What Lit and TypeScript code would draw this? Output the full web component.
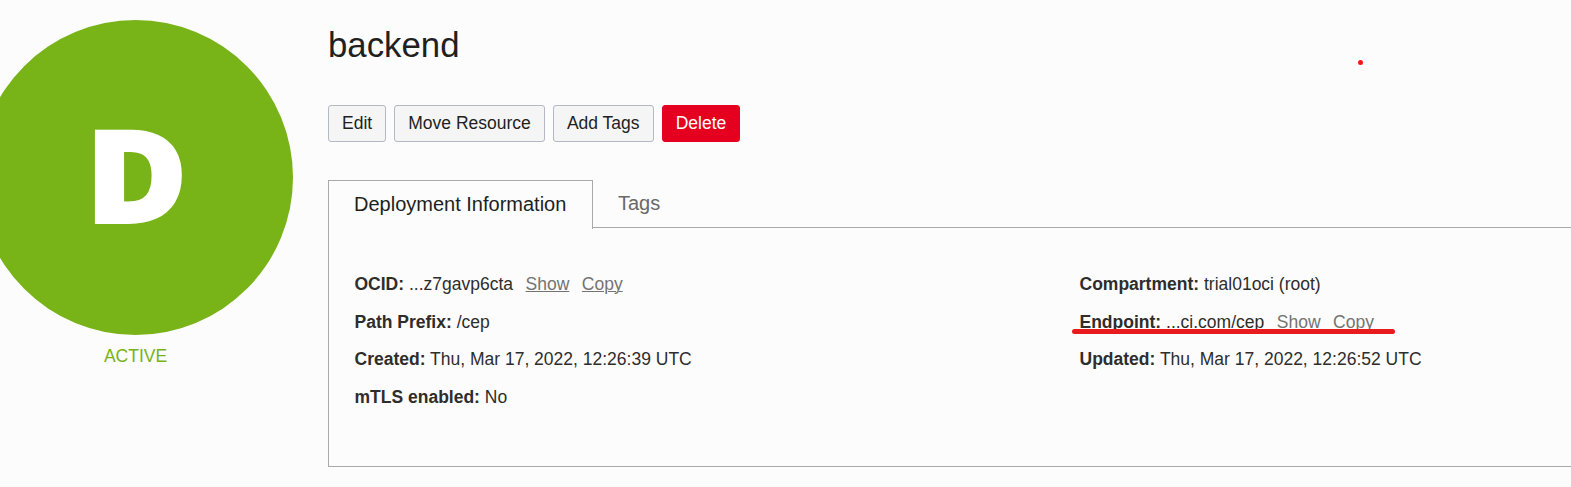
import { LitElement, html, css, nothing } from "lit";
import { customElement } from "lit/decorators.js";

interface Field {
  label: string;
  value: string;
  links?: boolean;
  marked?: boolean;
}

const LEFT: Field[] = [
  { label: "OCID:", value: "...z7gavp6cta", links: true },
  { label: "Path Prefix:", value: "/cep" },
  { label: "Created:", value: "Thu, Mar 17, 2022, 12:26:39 UTC" },
  { label: "mTLS enabled:", value: "No" },
];

const RIGHT: Field[] = [
  { label: "Compartment:", value: "trial01oci (root)" },
  { label: "Endpoint:", value: "...ci.com/cep", links: true, marked: true },
  { label: "Updated:", value: "Thu, Mar 17, 2022, 12:26:52 UTC" },
];

@customElement("app-root")
export class AppRoot extends LitElement {
  static styles = css`
    :host {
      display: flex;
      position: relative;
      box-sizing: border-box;
      height: 487px;
      overflow: hidden;
      background: #fcfcfc;
      color: #2f2d2c;
      font: 17.5px/20px "Liberation Sans", Arial, sans-serif;
    }
    .status {
      flex: none;
      width: 315px;
      margin: 20px 35px 0 -22px;
      text-align: center;
    }
    .badge {
      display: flex;
      align-items: center;
      justify-content: center;
      height: 315px;
      border-radius: 50%;
      background: #78b317;
      color: #fff;
      font: 800 129px/1 "Open Sans", sans-serif;
    }
    .letter {
      display: block;
      padding: 0 0 9px 2px;
      transform: scaleX(1.083);
      -webkit-text-stroke: 2px #fff;
    }
    .state { margin-top: 11px; color: #78b317; }
    .main { flex: 1; min-width: 0; padding-top: 24px; }
    h1 {
      margin: 0 0 39px;
      color: #221f1f;
      font-size: 34.8px;
      font-weight: 400;
      line-height: 42px;
    }
    .actions { display: flex; gap: 8.1px; }
    button {
      box-sizing: border-box;
      height: 37px;
      padding: 0 13px 1px;
      border: 1px solid #b3b8c2;
      border-radius: 3px;
      background: #f5f5f5;
      color: #221f1f;
      font: inherit;
    }
    .danger { border-color: #e5001f; background: #e5001f; color: #fff; }
    .tabs { display: flex; height: 48px; margin-top: 38px; }
    .tab {
      box-sizing: border-box;
      padding: 12px 25px 0;
      border: 1px solid #a9a9a9;
      border-bottom: 0;
      color: #221f1f;
      font-size: 20px;
      line-height: 23px;
      height: 49px;
      width: 265px;
      white-space: nowrap;
    }
    .idle {
      flex: 1;
      height: 48px;
      border-width: 0 0 1px;
      border-bottom: 1px solid #a9a9a9;
      color: #6b6966;
    }
    .panel {
      box-sizing: border-box;
      display: grid;
      grid-template-columns: 725px 1fr;
      height: 239px;
      padding: 38px 0 0 25.5px;
      border: solid #a9a9a9;
      border-width: 0 0 1px 1px;
    }
    .field { position: relative; height: 37.5px; line-height: 37.5px; white-space: nowrap; }
    b { font-weight: 700; }
    a { margin-left: 12.5px; color: #757371; text-decoration: underline; text-decoration-thickness: 1px; }
    .marked a { text-decoration: none; }
    .stroke {
      position: absolute;
      left: -7.5px;
      top: 25.5px;
      width: 323px;
      height: 5px;
      border-radius: 3px;
      background: #e81c1f;
    }
    .dot {
      position: absolute;
      left: 1357.5px;
      top: 59.5px;
      width: 5px;
      height: 5px;
      border-radius: 50%;
      background: #f01818;
    }
  `;

  private field(f: Field) {
    return html`<div class="field ${f.marked ? "marked" : ""}"><b>${f.label}</b> ${f.value}${f.links ? html`<a>Show</a><a>Copy</a>` : nothing}${f.marked ? html`<span class="stroke"></span>` : nothing}</div>`;
  }

  render() {
    return html`
      <aside class="status">
        <div class="badge"><span class="letter">D</span></div>
        <div class="state">ACTIVE</div>
      </aside>
      <main class="main">
        <h1>backend</h1>
        <div class="actions">
          <button>Edit</button>
          <button>Move Resource</button>
          <button>Add Tags</button>
          <button class="danger">Delete</button>
        </div>
        <nav class="tabs">
          <div class="tab">Deployment Information</div>
          <div class="tab idle">Tags</div>
        </nav>
        <section class="panel">
          <div>${LEFT.map((f) => this.field(f))}</div>
          <div>${RIGHT.map((f) => this.field(f))}</div>
        </section>
      </main>
      <span class="dot"></span>
    `;
  }
}
